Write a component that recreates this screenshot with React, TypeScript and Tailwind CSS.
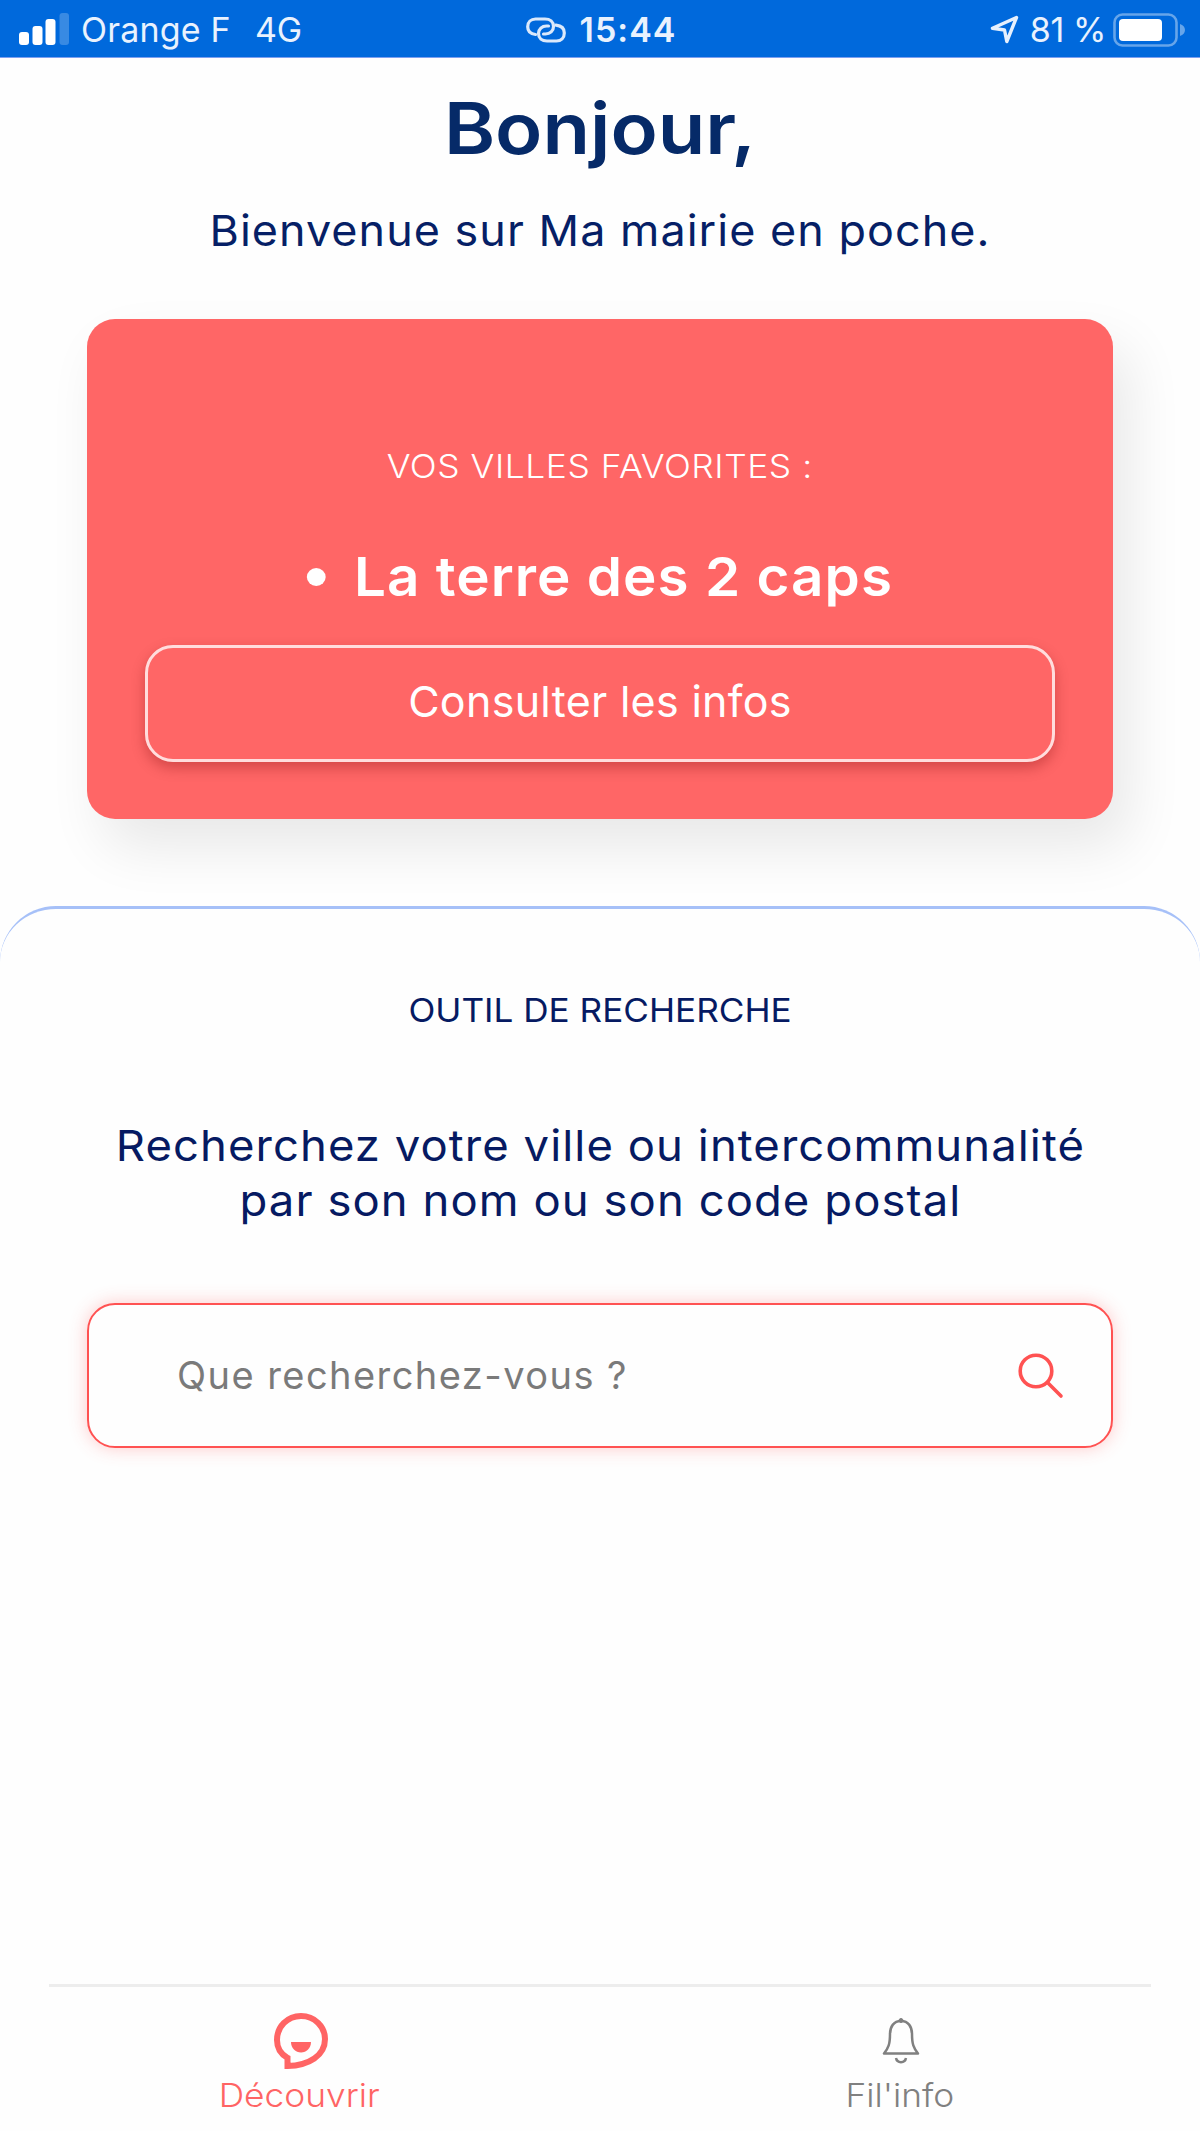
import type { ReactNode } from 'react';

function SignalIcon() {
  return (
    <svg width="52" height="34" viewBox="0 0 52 34" fill="#fff">
      <rect x="1" y="19" width="10" height="13" rx="3" />
      <rect x="14.500" y="13" width="10" height="19" rx="3" />
      <rect x="27.500" y="6" width="10" height="26" rx="3" />
      <rect x="41.500" y="0" width="9.500" height="32" rx="3" opacity="0.22" />
    </svg>
  );
}

function HotspotIcon() {
  return (
    <svg width="40" height="26" viewBox="0 0 40 26" fill="none" stroke="#dbe9fb" strokeWidth="3.200" strokeLinecap="round">
      <path d="M9.500 17.500C4.500 17 1.700 14 1.700 9.800C1.700 5 5 2 9.500 2H19C24 2 27.500 5 27.500 9.500C27.500 14 24 17 19.500 17H17.500" />
      <path d="M30 8.200C35 8.700 38.300 11.500 38.300 16C38.300 20.800 35 24 30.500 24H21C16 24 12.500 21 12.500 16.500C12.500 12 16 9 20.500 9H22.500" />
    </svg>
  );
}

function LocationIcon() {
  return (
    <svg width="30" height="30" viewBox="0 0 30 30" fill="none" stroke="#e6f0fd" strokeWidth="3.400" strokeLinejoin="round">
      <path d="M26.500 2.500L2.500 13.200L14.500 15L16.800 26.500Z" />
    </svg>
  );
}

function BatteryIcon() {
  return (
    <svg width="73" height="34" viewBox="0 0 73 34" fill="none">
      <rect x="1.500" y="1.500" width="62" height="31" rx="8" stroke="#fff" strokeOpacity="0.4" strokeWidth="2.6" />
      <rect x="6" y="6" width="43" height="22" rx="4" fill="#fff" />
      <path d="M67 11C70 12 72 14 72 17C72 20 70 22 67 23Z" fill="#fff" fillOpacity="0.4" />
    </svg>
  );
}

function SearchIcon() {
  return (
    <svg width="46" height="46" viewBox="0 0 46 46" fill="none" stroke="#ff5252" strokeWidth="3.600" strokeLinecap="round">
      <circle cx="18" cy="18" r="15.800" />
      <path d="M29.500 29.500L43 43" />
    </svg>
  );
}

function DiscoverIcon() {
  return (
    <svg width="56" height="58" viewBox="0 0 56 58" fill="none">
      <path
        d="M14.500 54V45.800C7.500 42 4 35.500 4 28C4 14.500 14.500 4 28 4C41.500 4 52 14.500 52 27C52 43.500 36 53.500 14.500 54Z"
        stroke="#ff6464"
        strokeWidth="6"
      />
      <path d="M18 30H38C38 36 33.500 40.500 28 40.500C22.500 40.500 18 36 18 30Z" fill="#ff6464" />
    </svg>
  );
}

function BellIcon() {
  return (
    <svg width="38" height="48" viewBox="0 0 38 48" fill="none" stroke="#808080" strokeWidth="2.500">
      <circle cx="19" cy="3.500" r="2" fill="#808080" strokeWidth="1" />
      <path d="M19 4C11.500 4 8 10 8 17C8 27 6.500 31 2 36.500H36C31.500 31 30 27 30 17C30 10 26.500 4 19 4Z" strokeLinejoin="round" />
      <path d="M14 41C15 46.500 23 46.500 24 41" />
    </svg>
  );
}

function StatusBar() {
  return (
    <header className="flex h-[58px] items-center border-b border-[#7d9ff0] bg-[#0069dc] pt-[2px] text-[34px] leading-none text-[#e9f2fe]">
      <div className="flex flex-1 items-center pl-[18px]">
        <SignalIcon />
        <span className="ml-[11px] tracking-[0.2px]">Orange F</span>
        <span className="ml-[24px]">4G</span>
      </div>
      <div className="flex items-center gap-[14px] pr-[2px]">
        <HotspotIcon />
        <span className="font-semibold tracking-[1px]">15:44</span>
      </div>
      <div className="flex flex-1 items-center justify-end pr-[14px]">
        <LocationIcon />
        <span className="ml-[10px] mr-[7px] tracking-[-0.4px]">81 %</span>
        <BatteryIcon />
      </div>
    </header>
  );
}

function FavoritesCard() {
  return (
    <section className="mx-[87px] mt-[63px] flex h-[500px] flex-col items-center rounded-[28px] bg-[#ff6666] px-[58px] text-white shadow-[16px_28px_56px_rgba(0,0,0,0.09)]">
      <h2 className="mt-[127px] scale-x-[1.072] whitespace-nowrap text-[33px] font-[350] leading-[40px] tracking-[0.5px]">
        VOS VILLES FAVORITES :
      </h2>
      <ul className="mt-[57px]">
        <li className="flex scale-x-[1.047] items-center gap-[27px] whitespace-nowrap text-[54px] font-semibold leading-[68px] tracking-[1px]">
          <span className="h-[18px] w-[18px] rounded-full bg-white" />
          La terre des 2 caps
        </li>
      </ul>
      <button className="mt-[34px] h-[117px] w-full rounded-[28px] border-[3px] border-[#ffdddd] pb-[5px] text-[43px] tracking-[0.3px] shadow-[0_6px_14px_rgba(110,0,0,0.3)]">
        Consulter les infos
      </button>
    </section>
  );
}

function SearchPanel() {
  return (
    <section className="mt-[87px] flex flex-1 flex-col items-center rounded-t-[56px] border-t-[3px] border-[#a6c0f8] px-[87px] text-[#061a62]">
      <h2 className="mt-[81px] scale-x-[1.064] whitespace-nowrap text-[33px] leading-[40px]">OUTIL DE RECHERCHE</h2>
      <p className="mt-[88px] scale-x-[1.057] whitespace-nowrap text-center text-[43px] leading-[55px] tracking-[1px]">
        Recherchez votre ville ou intercommunalité
        <br />
        par son nom ou son code postal
      </p>
      <div className="mt-[75px] flex h-[145px] w-full items-center justify-between rounded-[28px] border-2 border-[#ff5252] pl-[88px] pr-[47px] shadow-[0_0_18px_rgba(255,80,80,0.3)]">
        <input
          type="text"
          placeholder="Que recherchez-vous ?"
          className="w-[600px] text-[38px] tracking-[1.45px] placeholder-[#7a7a7a] outline-none"
        />
        <SearchIcon />
      </div>
    </section>
  );
}

function NavItem({ icon, label, color }: { icon: ReactNode; label: string; color: string }) {
  return (
    <a className={`flex w-1/2 flex-col items-center ${color}`}>
      <span className="flex h-[60px] items-center pl-[2px] pt-[2px]">{icon}</span>
      <span className="mt-[3px] scale-x-[1.07] pr-[1px] text-[33px] font-[350] leading-[44px]">{label}</span>
    </a>
  );
}

export default function App() {
  return (
    <div className="flex h-[2131px] w-[1200px] flex-col overflow-hidden bg-[#fefefe] font-['Inter',sans-serif]">
      <StatusBar />
      <div className="pt-[26px] text-center text-[#062a68]">
        <h1 className="scale-x-[1.095] text-[71px] font-semibold leading-[88px]">Bonjour,</h1>
        <p className="mt-[32px] scale-x-[1.044] text-[43px] leading-[52px] tracking-[1px] text-[#061f66]">
          Bienvenue sur Ma mairie en poche.
        </p>
      </div>
      <FavoritesCard />
      <SearchPanel />
      <nav className="flex h-[147px] flex-col">
        <div className="mx-[49px] h-[3px] bg-[#ededed]" />
        <div className="flex pt-[23px]">
          <NavItem icon={<DiscoverIcon />} label="Découvrir" color="text-[#ff6464]" />
          <NavItem icon={<BellIcon />} label="Fil'info" color="text-[#808080]" />
        </div>
      </nav>
    </div>
  );
}
